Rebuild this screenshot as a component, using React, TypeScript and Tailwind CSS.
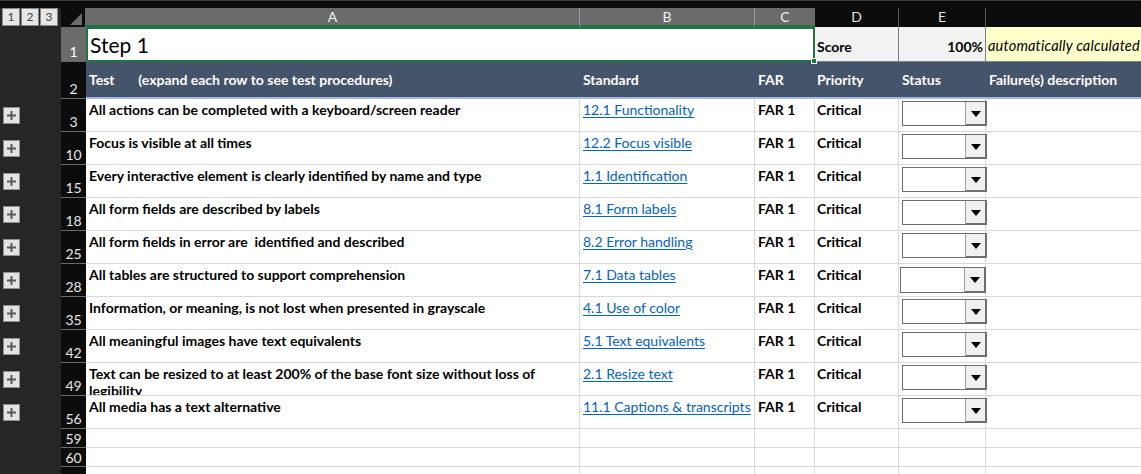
import React from "react";

const rows = [
  { n: "3", test: "All actions can be completed with a keyboard/screen reader", std: "12.1 Functionality" },
  { n: "10", test: "Focus is visible at all times", std: "12.2 Focus visible" },
  { n: "15", test: "Every interactive element is clearly identified by name and type", std: "1.1 Identification" },
  { n: "18", test: "All form fields are described by labels", std: "8.1 Form labels" },
  { n: "25", test: "All form fields in error are  identified and described", std: "8.2 Error handling" },
  { n: "28", test: "All tables are structured to support comprehension", std: "7.1 Data tables", shift: true },
  { n: "35", test: "Information, or meaning, is not lost when presented in grayscale", std: "4.1 Use of color" },
  { n: "42", test: "All meaningful images have text equivalents", std: "5.1 Text equivalents" },
  { n: "49", test: "Text can be resized to at least 200% of the base font size without loss of", test2: "legibility", std: "2.1 Resize text" },
  { n: "56", test: "All media has a text alternative", std: "11.1 Captions & transcripts" },
];

function PlusButton() {
  return (
    <div className="flex h-[17px] w-[17px] items-center justify-center border border-[#8f8f8f] bg-[#e3e3e3]">
      <svg width="9" height="9" viewBox="0 0 9 9">
        <rect x="0" y="3.5" width="9" height="2" fill="#5a5a5a" />
        <rect x="3.5" y="0" width="2" height="9" fill="#5a5a5a" />
      </svg>
    </div>
  );
}

function Dropdown({ shift }: { shift?: boolean }) {
  return (
    <div
      className={
        shift
          ? "ml-[1px] mt-[3px] flex h-[26px] w-[86px] border border-[#6e6e6e] bg-white"
          : "ml-[3px] mt-[2px] flex h-[25px] w-[85px] border border-[#6e6e6e] bg-white"
      }
    >
      <div className="flex-1" />
      <div className="flex w-[21px] items-center justify-center border-l border-[#a0a0a0] bg-[#f0f0f0] shadow-[inset_-1px_-1px_0_#6e6e6e]">
        <div className="h-0 w-0 border-x-[5px] border-t-[6px] border-x-transparent border-t-black" />
      </div>
    </div>
  );
}

function RowHead({ n, h, selected }: { n: string; h: string; selected?: boolean }) {
  return (
    <div className={`flex ${h} shrink-0`}>
      <div className="w-[61px] bg-[#262626]" />
      <div
        className={`flex w-[25px] items-end justify-center border-b border-[#6a6a6a] pb-[1px] text-[14px] leading-[16px] ${
          selected ? "bg-[#6b6b6b] text-white" : "bg-[#0c0c0c] text-[#e6e6e6]"
        }`}
      >
        {n}
      </div>
    </div>
  );
}

export default function App() {
  const font = "font-['Lato','Noto_Sans',sans-serif]";
  return (
    <div className={`flex h-[474px] w-[1141px] flex-col overflow-hidden bg-white ${font} text-[14px] text-black`}>
      <div className="h-[8px] shrink-0 border-t border-[#3c3c3c] bg-[#0b0b0b]" />

      {/* column headers */}
      <div className="flex h-[19px] shrink-0 text-[14px] leading-[18px]">
        <div className="flex w-[61px] items-start gap-[1px] bg-[#262626] pl-[2px]">
          {["1", "2", "3"].map((k) => (
            <div
              key={k}
              className="flex h-[18px] w-[18px] items-center justify-center border border-[#8a8a8a] bg-[#e6e6e6] text-[12px] text-[#444]"
            >
              {k}
            </div>
          ))}
        </div>
        <div className="relative w-[25px] border-r border-[#6a6a6a] bg-[#0c0c0c]">
          <div className="absolute bottom-[2px] right-[3px] h-0 w-0 border-b-[12px] border-l-[12px] border-b-[#6b6b6b] border-l-transparent" />
        </div>
        <div className="w-[494px] border-r border-b-2 border-r-[#9a9a9a] border-b-[#217346] bg-[#6b6b6b] text-center text-[#f2f2f2]">A</div>
        <div className="w-[175px] border-r border-b-2 border-r-[#9a9a9a] border-b-[#217346] bg-[#6b6b6b] text-center text-[#f2f2f2]">B</div>
        <div className="w-[60px] border-b-2 border-b-[#217346] bg-[#6b6b6b] text-center text-[#f2f2f2]">C</div>
        <div className="w-[84px] border-r border-[#5a5a5a] bg-[#0c0c0c] text-center text-[#e6e6e6]">D</div>
        <div className="w-[87px] border-r border-[#5a5a5a] bg-[#0c0c0c] text-center text-[#e6e6e6]">E</div>
        <div className="flex-1 bg-[#0c0c0c]" />
      </div>

      {/* row 1 */}
      <div className="flex h-[35px] shrink-0">
        <RowHead n="1" h="h-[35px]" selected />
        <div className="relative flex w-[729px] items-end border-2 border-[#217346] pb-[2px] pl-[2px] text-[21px] leading-[26px]">
          Step 1
          <div className="absolute -bottom-[4px] -right-[4px] h-[6px] w-[6px] border border-white bg-[#217346]" />
        </div>
        <div className="flex w-[84px] items-end border-r border-b border-[#7f7f7f] bg-[#f2f2f2] pb-[4px] pl-[2px] font-bold">Score</div>
        <div className="flex w-[87px] items-end justify-end border-r border-b border-[#7f7f7f] bg-[#f2f2f2] pb-[4px] pr-[2px] font-bold">100%</div>
        <div className="flex flex-1 items-end overflow-hidden whitespace-nowrap border-b border-[#7f7f7f] bg-[#ffffcc] pb-[4px] pl-[2px] text-[14.5px] italic tracking-[0.2px]">
          automatically calculated from status
        </div>
      </div>

      {/* row 2 */}
      <div className="flex h-[37px] shrink-0">
        <RowHead n="2" h="h-[37px]" />
        <div className="flex flex-1 border-b-2 border-[#a3b8de] bg-[#44546a] pt-[10px] font-bold text-white leading-[16px]">
          <div className="w-[494px] whitespace-pre pl-[3px]">{"Test       (expand each row to see test procedures)"}</div>
          <div className="w-[175px] pl-[3px]">Standard</div>
          <div className="w-[60px] pl-[3px]">FAR</div>
          <div className="w-[84px] pl-[2px]">Priority</div>
          <div className="w-[87px] pl-[3px]">Status</div>
          <div className="flex-1 whitespace-nowrap pl-[3px]">Failure(s) description</div>
        </div>
      </div>

      {/* data rows */}
      {rows.map((r) => (
        <div key={r.n} className="flex h-[33px] shrink-0">
          <div className="flex w-[61px] items-center bg-[#262626] pl-[3px]">
            <PlusButton />
          </div>
          <div className="flex w-[25px] items-end justify-center border-b border-[#6a6a6a] bg-[#0c0c0c] pb-[1px] leading-[16px] text-[#e6e6e6]">
            {r.n}
          </div>
          <div className="w-[494px] overflow-hidden border-r border-b border-[#d9d9d9] pl-[3px] pt-[2px] font-bold leading-[17px]">
            <div className="whitespace-pre">{r.test}</div>
            {r.test2 && <div>{r.test2}</div>}
          </div>
          <div className="w-[175px] border-r border-b border-[#d9d9d9] pl-[3px] pt-[2px] leading-[17px]">
            <span className="whitespace-nowrap text-[#0563c1] underline underline-offset-2">{r.std}</span>
          </div>
          <div className="w-[60px] border-r border-b border-[#d9d9d9] pl-[3px] pt-[2px] font-bold leading-[17px]">FAR 1</div>
          <div className="w-[84px] border-r border-b border-[#d9d9d9] pl-[2px] pt-[2px] font-bold leading-[17px]">Critical</div>
          <div className="w-[87px] border-r border-b border-[#d9d9d9]">
            <Dropdown shift={r.shift} />
          </div>
          <div className="flex-1 border-b border-[#d9d9d9]" />
        </div>
      ))}

      {/* empty rows */}
      {["59", "60", ""].map((n, i) => (
        <div key={i} className="flex h-[19px] shrink-0">
          <div className="w-[61px] bg-[#262626]" />
          <div className="flex w-[25px] items-end justify-center border-b border-[#6a6a6a] bg-[#0c0c0c] leading-[16px] text-[#e6e6e6]">
            {n}
          </div>
          <div className="w-[494px] border-r border-b border-[#d9d9d9]" />
          <div className="w-[175px] border-r border-b border-[#d9d9d9]" />
          <div className="w-[60px] border-r border-b border-[#d9d9d9]" />
          <div className="w-[84px] border-r border-b border-[#d9d9d9]" />
          <div className="w-[87px] border-r border-b border-[#d9d9d9]" />
          <div className="flex-1 border-b border-[#d9d9d9]" />
        </div>
      ))}
    </div>
  );
}
